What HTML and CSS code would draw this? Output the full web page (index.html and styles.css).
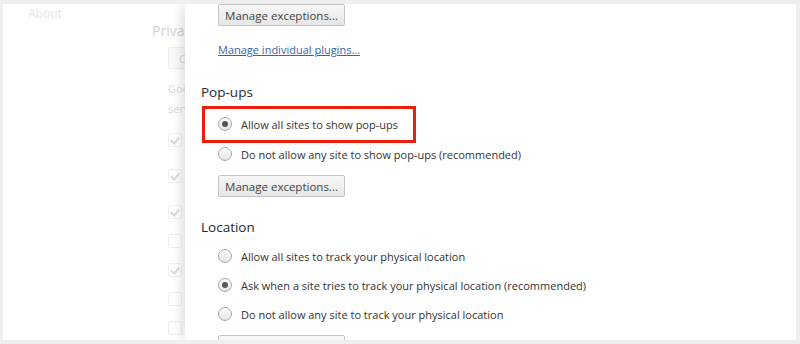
FILE: index.html
```html
<!DOCTYPE html>
<html lang="en">
<head>
  <meta charset="UTF-8" />
  <title>Content settings</title>
  <link rel="stylesheet" href="styles.css">
</head>
<body>

  <div class="window">

    <!-- settings page behind the dialog, washed out -->
    <div class="page">
      <div class="nav">
        <span class="nav-item">About</span>
      </div>
      <div class="page-main">
        <h3 class="page-title">Privacy</h3>
        <button class="page-btn">Content settings...</button>
        <p class="page-text first">Google Chrome may use web services to improve your browsing experience.</p>
        <p class="page-text">services. You may optionally disable these services.</p>
        <div class="page-check first checked"></div>
        <div class="page-check spaced checked"></div>
        <div class="page-check spaced checked"></div>
        <div class="page-check"></div>
        <div class="page-check checked"></div>
        <div class="page-check"></div>
        <div class="page-check"></div>
      </div>
    </div>

    <div class="dialog">
      <button class="btn">Manage exceptions...</button>
      <a href="#" class="link">Manage individual plugins...</a>

      <h2 class="section-title">Pop-ups</h2>
      <div class="highlight">
        <label class="option"><span class="radio checked"></span>Allow all sites to show pop-ups</label>
      </div>
      <label class="option"><span class="radio"></span>Do not allow any site to show pop-ups (recommended)</label>
      <button class="btn">Manage exceptions...</button>

      <h2 class="section-title location">Location</h2>
      <div class="options">
        <label class="option"><span class="radio"></span>Allow all sites to track your physical location</label>
        <label class="option"><span class="radio checked"></span>Ask when a site tries to track your physical location (recommended)</label>
        <label class="option"><span class="radio"></span>Do not allow any site to track your physical location</label>
      </div>
      <button class="btn">Manage exceptions...</button>
    </div>

  </div>

</body>
</html>
```

FILE: styles.css
```css
body {
  margin: 0;
  background: #efefef;
  font-family: "Open Sans", Arial, sans-serif;
  font-size: 11px;
  color: #333;
}

.window {
  display: flex;
  margin: 4px 4px 4px 3px;
  height: 336px;
  background: #fff;
  overflow: hidden;
}

/* faded settings page */
.page {
  display: flex;
  width: 182px;
  flex-shrink: 0;
  overflow: hidden;
  white-space: nowrap;
  color: #dadada;
}

.nav {
  width: 165px;
  flex-shrink: 0;
}

.nav-item {
  display: inline-block;
  margin: 0 0 0 21px;
  padding: 1px 4px;
  font-size: 12px;
  color: #e6e6e6;
}

.page-main {
  padding-top: 17px;
}

.page-title {
  margin: 0 0 0 -16px;
  font-size: 14px;
  font-weight: normal;
  line-height: 20px;
  color: #d2d2d2;
}

.page-btn {
  display: block;
  margin-top: 6px;
  height: 22px;
  padding: 0 10px;
  border: 1px solid #ededed;
  border-radius: 2px;
  background: #fafafa;
  font-family: inherit;
  font-size: 11px;
  color: #d4d4d4;
}

.page-text {
  margin: 0;
  line-height: 20px;
}

.page-text.first {
  margin-top: 10px;
}

.page-check {
  position: relative;
  width: 12px;
  height: 12px;
  border: 1px solid #f0f0f0;
  border-radius: 2px;
  margin-top: 15px;
}

.page-check.first {
  margin-top: 14px;
}

.page-check.spaced {
  margin-top: 22px;
}

.page-check.checked::after {
  content: "";
  position: absolute;
  left: 3px;
  top: 1px;
  width: 4px;
  height: 7px;
  border: solid #dcdcdc;
  border-width: 0 2px 2px 0;
  transform: rotate(40deg);
}

/* dialog */
.dialog {
  flex: 1;
  padding-left: 16px;
  box-shadow: -4px 0 10px rgba(0, 0, 0, 0.12);
  z-index: 1;
  background: #fff;
  white-space: nowrap;
}

.btn {
  display: block;
  margin-left: 17px;
  width: 127px;
  height: 22px;
  padding: 0;
  border: 1px solid #c4c4c4;
  border-radius: 2px;
  background: linear-gradient(#f8f8f8, #e6e6e6);
  font-family: inherit;
  font-size: 11.5px;
  color: #444;
}

.link {
  display: block;
  margin: 16px 0 0 17px;
  width: max-content;
  line-height: 16px;
  color: #3c5fb0;
}

.section-title {
  margin: 24px 0 0;
  font-size: 13.5px;
  font-weight: normal;
  line-height: 20px;
  color: #2a2a2a;
}

.section-title.location {
  margin-top: 20px;
}

.highlight {
  margin: 4px 0 0 1px;
  width: 195px;
  padding: 4px 0 5px 13px;
  border: 3px solid #f01c0a;
}

.option {
  display: flex;
  align-items: center;
  height: 22px;
  padding-left: 17px;
  margin-top: 7px;
}

.highlight .option {
  margin-top: 0;
  padding-left: 0;
}

.highlight + .option {
  margin-top: 0;
}

.options {
  margin-top: 8px;
  margin-bottom: 10px;
}

.option + .btn {
  margin-top: 10px;
}

.radio {
  position: relative;
  width: 12px;
  height: 12px;
  margin-right: 9px;
  border: 1px solid #a8a8a8;
  border-radius: 50%;
  background: linear-gradient(#fdfdfd, #e4e4e4);
  flex-shrink: 0;
}

.radio.checked::after {
  content: "";
  position: absolute;
  left: 3px;
  top: 3px;
  width: 6px;
  height: 6px;
  border-radius: 50%;
  background: #555;
}
```
